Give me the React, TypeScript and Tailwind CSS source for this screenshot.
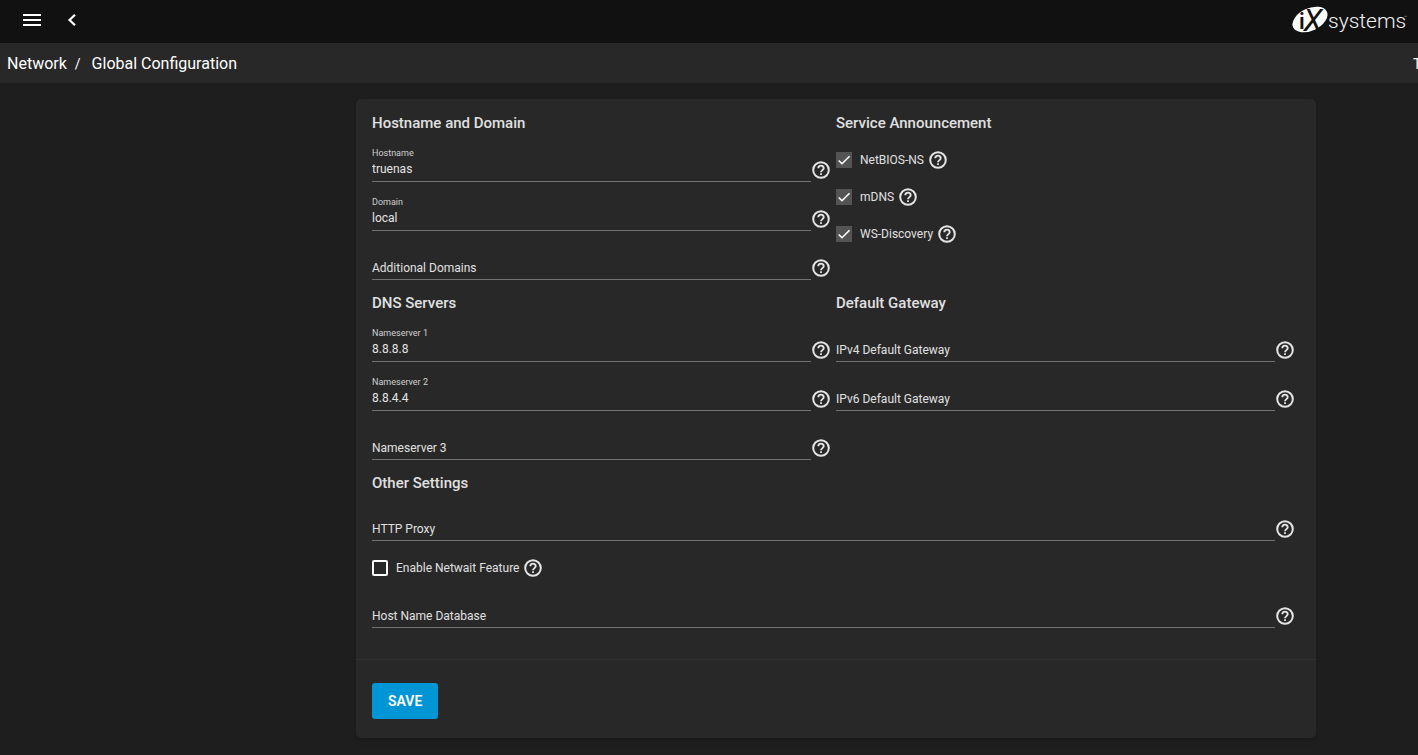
import { useState } from "react";

function HelpIcon({ label }: { label: string }) {
  return (
    <button type="button" aria-label={`Help: ${label}`} className="flex w-5 shrink-0 items-center justify-center text-[#e4e4e4]">
      <svg viewBox="0 0 22 22" className="h-[22px] w-[22px] shrink-0" fill="none" stroke="currentColor" aria-hidden="true">
        <circle cx="11" cy="11" r="7.800" strokeWidth="2" />
        <path d="M8.300 9.300a2.700 2.700 0 0 1 5.400 0c0 1.700-2.700 2-2.700 4" strokeWidth="1.900" />
        <path d="M10.100 15.200h1.800" strokeWidth="1.800" />
      </svg>
    </button>
  );
}

function Field({ id, label, initial = "", height = "h-[49px]" }: { id: string; label: string; initial?: string; height?: string }) {
  const [value, setValue] = useState(initial);
  return (
    <div className={`flex items-end pr-[5px] ${height}`}>
      <div className="relative flex min-w-0 flex-1 flex-col border-b border-[#727272]">
        <label
          htmlFor={id}
          className={value ? "text-[9px] leading-3 text-[#d0d0d0]" : "pointer-events-none absolute bottom-[3px] left-0 text-xs leading-4 text-[#e0e0e0]"}
        >
          {label}
        </label>
        <input
          id={id}
          value={value}
          onChange={(e) => setValue(e.target.value)}
          className="mb-[3px] mt-px h-[18px] w-full bg-transparent text-xs leading-4 text-[#e4e4e4] outline-none"
        />
      </div>
      <div className="mb-px flex">
        <HelpIcon label={label} />
      </div>
    </div>
  );
}

function Check({ id, label, initial = false }: { id: string; label: string; initial?: boolean }) {
  return (
    <div className="flex h-[37px] items-center">
      <span className="relative flex h-4 w-4">
        <input
          id={id}
          type="checkbox"
          defaultChecked={initial}
          className="peer h-4 w-4 appearance-none rounded-[2px] border-2 border-white checked:rounded-none checked:border-0 checked:bg-[#545454]"
        />
        <svg viewBox="0 0 24 24" className="pointer-events-none absolute inset-0 hidden h-4 w-4 peer-checked:block" fill="none" stroke="#fff" strokeWidth="2.4" aria-hidden="true">
          <path d="M4.100 12.700 9 17.600 20.300 6.300" />
        </svg>
      </span>
      <label htmlFor={id} className="ml-2 mr-1 text-xs leading-4 text-[#e0e0e0]">
        {label}
      </label>
      <HelpIcon label={label} />
    </div>
  );
}

function Heading({ children }: { children: string }) {
  return <h3 className="text-[15px] font-medium leading-5 text-[#e0e0e0]">{children}</h3>;
}

function Logo() {
  return (
    <svg viewBox="0 0 120 36" className="h-9 w-[120px]" role="img" aria-label="iXsystems">
      <ellipse cx="20" cy="17.500" rx="18.600" ry="11.200" transform="rotate(-25 20 17.500)" fill="#fff" />
      <text x="9" y="27" fontSize="22" fontWeight="600" fontFamily="Roboto, sans-serif" fill="#111">i</text>
      <text x="13.500" y="28.500" fontSize="31" fontWeight="400" fontStyle="italic" fontFamily="Roboto, sans-serif" fill="#111">X</text>
      <text x="38" y="26" fontSize="21" fontWeight="300" fontFamily="Roboto, sans-serif" fill="#f2f2f2">systems</text>
      <text x="114" y="17" fontSize="5" fontFamily="Roboto, sans-serif" fill="#aaa">™</text>
    </svg>
  );
}

export default function App() {
  return (
    <div className="flex min-h-screen flex-col overflow-hidden bg-[#1e1e1e] font-['Roboto',sans-serif] text-white">
      <header className="flex h-[43px] items-start bg-[#111]">
        <button type="button" aria-label="Toggle menu" className="ml-5 mt-2">
          <svg viewBox="0 0 24 24" className="h-6 w-6" fill="currentColor" aria-hidden="true">
            <path d="M3 18h18v-2H3v2zm0-5h18v-2H3v2zm0-7v2h18V6H3z" />
          </svg>
        </button>
        <button type="button" aria-label="Collapse menu" className="ml-4 mt-2">
          <svg viewBox="0 0 24 24" className="h-6 w-6" fill="none" stroke="currentColor" strokeWidth="2.200" aria-hidden="true">
            <path d="M15 6.700 9.500 12l5.500 5.300" />
          </svg>
        </button>
        <a href="#home" className="ml-auto mr-2 mt-0.5">
          <Logo />
        </a>
      </header>
      <nav aria-label="Breadcrumb" className="flex h-10 items-center bg-[#282828] pl-[7px] pt-px text-base leading-6">
        <a href="#network">Network</a>
        <span className="mx-2 pr-[3px] text-sm">/</span>
        <a href="#global">Global Configuration</a>
        <span className="ml-auto w-[5px] overflow-hidden text-sm">T</span>
      </nav>
      <main className="pt-4 pb-4 pl-[254px]">
        <form onSubmit={(e) => e.preventDefault()} className="mx-auto max-w-[960px] rounded-[5px] bg-[#282828] pt-3.5 shadow-md">
          <div className="px-4 pb-[31px]">
            <div className="grid grid-cols-2">
              <section className="pb-[13px]">
                <Heading>Hostname and Domain</Heading>
                <Field id="hostname" label="Hostname" initial="truenas" />
                <Field id="domain" label="Domain" initial="local" />
                <Field id="domains" label="Additional Domains" />
              </section>
              <section>
                <Heading>Service Announcement</Heading>
                <div className="pt-2">
                  <Check id="netbios" label="NetBIOS-NS" initial />
                  <Check id="mdns" label="mDNS" initial />
                  <Check id="wsd" label="WS-Discovery" initial />
                </div>
              </section>
              <section className="pb-[13px]">
                <Heading>DNS Servers</Heading>
                <Field id="ns1" label="Nameserver 1" initial="8.8.8.8" />
                <Field id="ns2" label="Nameserver 2" initial="8.8.4.4" />
                <Field id="ns3" label="Nameserver 3" />
              </section>
              <section>
                <Heading>Default Gateway</Heading>
                <Field id="gw4" label="IPv4 Default Gateway" />
                <Field id="gw6" label="IPv6 Default Gateway" />
              </section>
            </div>
            <section>
              <Heading>Other Settings</Heading>
              <Field id="proxy" label="HTTP Proxy" height="h-12" />
              <div className="pt-2">
                <Check id="netwait" label="Enable Netwait Feature" />
              </div>
              <Field id="hosts" label="Host Name Database" height="h-[42px]" />
            </section>
          </div>
          <div className="border-t border-[#303030] px-4 pb-[19px] pt-[23px]">
            <button type="submit" className="h-9 rounded-[3px] bg-[#0095d5] px-4 text-sm font-semibold text-white">
              SAVE
            </button>
          </div>
        </form>
      </main>
    </div>
  );
}
